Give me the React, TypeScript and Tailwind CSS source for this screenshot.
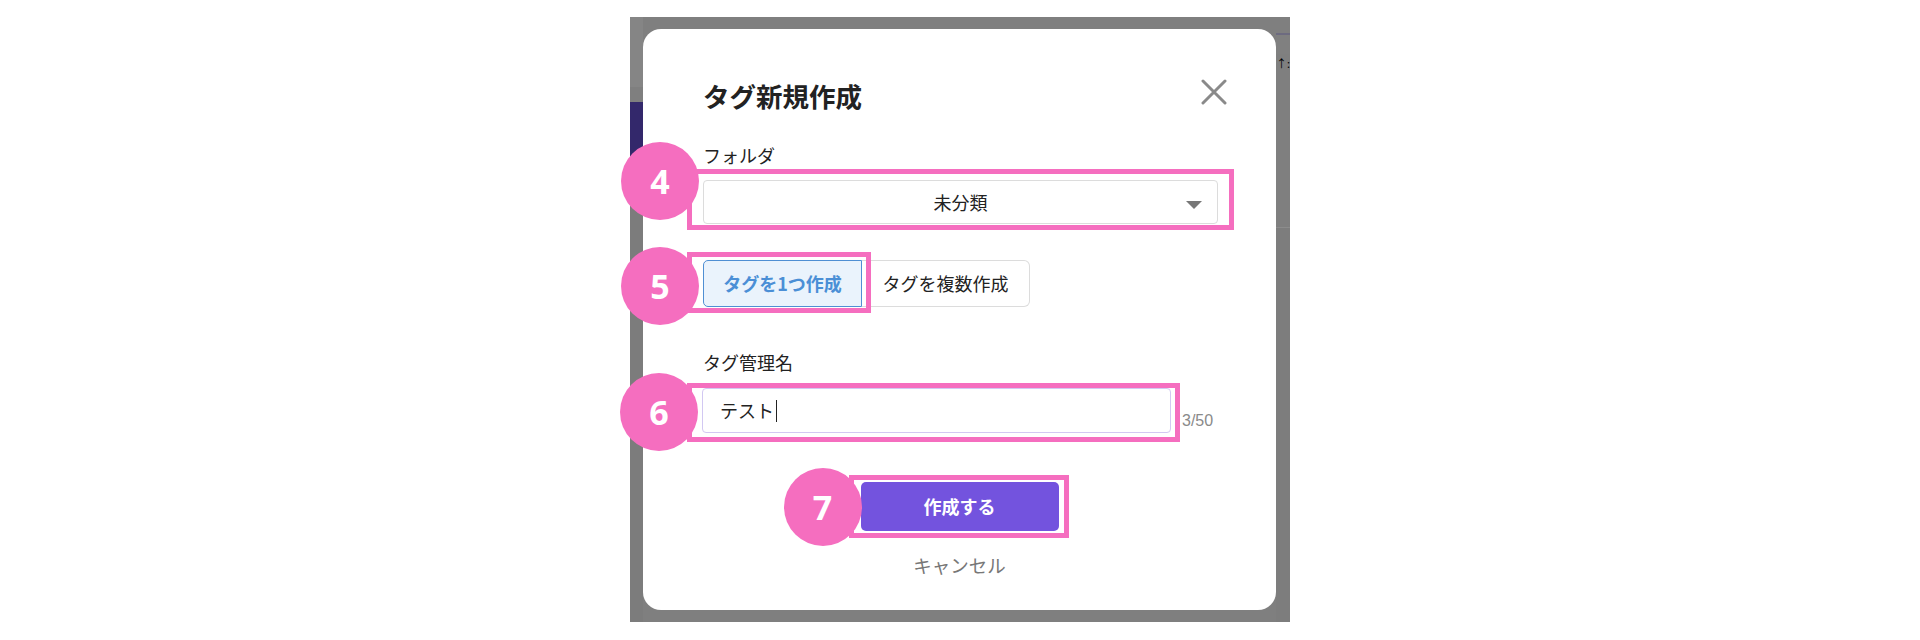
import React from 'react';

const PINK = 'bg-[#f56ebf]';

function Marker({ n, className }: { n: string; className: string }) {
  return (
    <div
      className={`absolute w-[78px] h-[78px] rounded-full ${PINK} flex items-center justify-center text-white text-[34px] font-bold font-['Open_Sans','Noto_Sans',sans-serif] ${className}`}
    >
      {n}
    </div>
  );
}

function CloseIcon() {
  return (
    <svg width="26" height="26" viewBox="0 0 26 26" className="mt-px">
      <path d="M2 2 L24 24 M24 2 L2 24" stroke="#8a8a8a" strokeWidth="3" strokeLinecap="round" />
    </svg>
  );
}

export default function App() {
  return (
    <div className="w-[1920px] h-[640px] bg-white flex justify-center font-['Noto_Sans_CJK_JP','Noto_Sans',sans-serif] text-[#222]">
      <div className="mt-[17px] w-[660px] h-[605px] bg-[#7f7f7f] flex">
        {/* left edge of the page behind the dialog */}
        <div className="w-[13px] flex flex-col">
          <div className="h-[70px] bg-[#858585]" />
          <div className="h-[15px] bg-[#7f7f7f]" />
          <div className="h-[82px] bg-[#33286b]" />
          <div className="flex-1 bg-[#7c7c7c]" />
        </div>

        <div className="mt-[12px] w-[633px] h-[581px] bg-white rounded-[18px] flex flex-col">
          <div className="pt-[49px] pl-[60px] pr-[49px] flex justify-between items-start">
            <h1 className="text-[26.5px] leading-[36px] font-bold">タグ新規作成</h1>
            <CloseIcon />
          </div>

          <div className="mt-[29px] pl-[60px] text-[18px] leading-[24px]">フォルダ</div>
          <div className="mt-[13px] ml-[60px] w-[515px] h-[44px] relative">
            <div className="absolute -left-[16px] -right-[16px] -top-[11px] -bottom-[6px] border-[5px] border-[#f56ebf]" />
            <div className="relative h-full bg-white border border-[#dcdcdc] rounded-[4px] flex items-center justify-center text-[18px]">
              未分類
              <svg width="16" height="8" viewBox="0 0 16 8" className="absolute right-[15px] top-[20px]">
                <path d="M0 0 H16 L8 8 Z" fill="#777" />
              </svg>
            </div>
            <Marker n="4" className="-left-[82px] -top-[38px]" />
          </div>

          <div className="mt-[36px] ml-[60px] flex">
            <div className="relative">
              <div className="absolute -left-[16px] -right-[9px] -top-[8px] -bottom-[6px] border-[5px] border-[#f56ebf]" />
              <div className="relative w-[159px] h-[47px] bg-[#eaf3fc] border border-[#4f8fd3] rounded-l-[5px] flex items-center justify-center text-[18px] font-bold text-[#4b8fd6]">
                タグを1つ作成
              </div>
              <Marker n="5" className="-left-[82px] -top-[13px]" />
            </div>
            <div className="w-[168px] h-[47px] border border-l-0 border-[#dcdcdc] rounded-r-[6px] flex items-center justify-center text-[18px]">
              タグを複数作成
            </div>
          </div>

          <div className="mt-[43px] pl-[60px] text-[18px] leading-[24px]">タグ管理名</div>
          <div className="mt-[14px] ml-[59px] flex items-end">
            <div className="relative w-[469px] h-[45px]">
              <div className="absolute -left-[15px] -right-[9px] -top-[5px] -bottom-[9px] border-[5px] border-[#f56ebf]" />
              <div className="relative h-full bg-white border border-[#d2c8f2] rounded-[4px] flex items-center pl-[17px] text-[18px]">
                テスト
                <span className="ml-[2px] w-px h-[22px] bg-[#222]" />
              </div>
              <Marker n="6" className="-left-[82px] -top-[15px]" />
            </div>
            <span className="mb-[2px] ml-[11px] text-[16px] leading-[20px] text-[#8a8a8a] font-['Liberation_Sans',sans-serif]">3/50</span>
          </div>

          <div className="mt-[49px] flex justify-center">
            <div className="relative">
              <div className="absolute -left-[12px] -right-[10px] -top-[7px] -bottom-[7px] border-[5px] border-[#f56ebf]" />
              <button className="relative w-[198px] h-[49px] bg-[#7353de] rounded-[5px] text-white text-[18px] font-bold">
                作成する
              </button>
              <Marker n="7" className="-left-[77px] -top-[14px]" />
            </div>
          </div>
          <div className="mt-[22px] text-center text-[18.5px] leading-[24px] text-[#777]">キャンセル</div>
        </div>

        {/* right edge of the page behind the dialog */}
        <div className="w-[14px] flex flex-col overflow-hidden">
          <div className="h-[16px] bg-[#7f7f7f]" />
          <div className="h-[2px] bg-[#6d6b80]" />
          <div className="h-[19px] bg-[#808080]" />
          <div className="h-[18px] text-[11px] leading-[18px] text-black whitespace-nowrap">↑:</div>
          <div className="h-[155px] bg-[#7f7f7f]" />
          <div className="h-px bg-[#8c8c8c]" />
          <div className="flex-1 bg-[#7d7d7d]" />
        </div>
      </div>
    </div>
  );
}
